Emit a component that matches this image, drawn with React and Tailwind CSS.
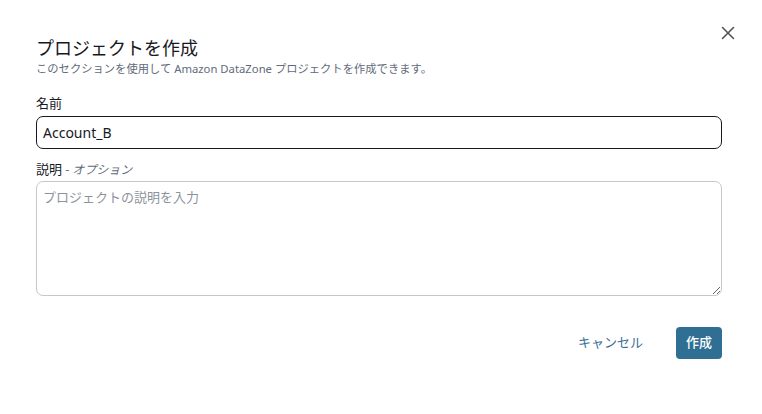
import React from "react";

export default function App() {
  return (
    <div
      className="w-[762px] h-[414px] bg-white relative"
      style={{ fontFamily: '"Noto Sans", "Noto Sans CJK JP", sans-serif' }}
    >
      <button className="absolute left-[720px] top-[25px] w-[16px] h-[16px] flex items-center justify-center text-[#545b64]">
        <svg width="14" height="14" viewBox="0 0 14 14" fill="none">
          <path d="M1.5 1.5 L12.5 12.5 M12.5 1.5 L1.5 12.5" stroke="#545454" strokeWidth="1.6" strokeLinecap="round" />
        </svg>
      </button>
      <div className="pl-[36px] pr-[40px] pt-[35px] flex flex-col">
        <h1 className="text-[18px] leading-[26px] text-[#16191f] font-normal">プロジェクトを作成</h1>
        <p className="text-[11.3px] leading-[16px] text-[#5f6b7a] mt-0">
          このセクションを使用して Amazon DataZone プロジェクトを作成できます。
        </p>
        <label className="mt-[17px] text-[13px] leading-[18px] text-[#16191f]">名前</label>
        <div className="mt-[4px] h-[33px] border border-[#16191f] rounded-[7px] flex items-center px-[6px] text-[14px] text-[#16191f]">
          Account_B
        </div>
        <label className="mt-[11px] text-[13px] leading-[18px] text-[#16191f]">
          説明 <span className="italic text-[#5f6b7a] text-[12px]">- オプション</span>
        </label>
        <textarea
          className="mt-[2px] h-[115px] border border-[#c6c6cd] rounded-[7px] px-[6px] py-[6px] text-[13px] text-[#16191f] placeholder:text-[#8c939c] outline-none resize-y"
          placeholder="プロジェクトの説明を入力"
        />
        <div className="mt-[31px] flex justify-end items-center gap-[33px]">
          <span className="text-[13px] text-[#3a6f95]">キャンセル</span>
          <button className="w-[46px] h-[32px] rounded-[4px] bg-[#2f6f93] text-white text-[13px] font-medium flex items-center justify-center">
            作成
          </button>
        </div>
      </div>
    </div>
  );
}
